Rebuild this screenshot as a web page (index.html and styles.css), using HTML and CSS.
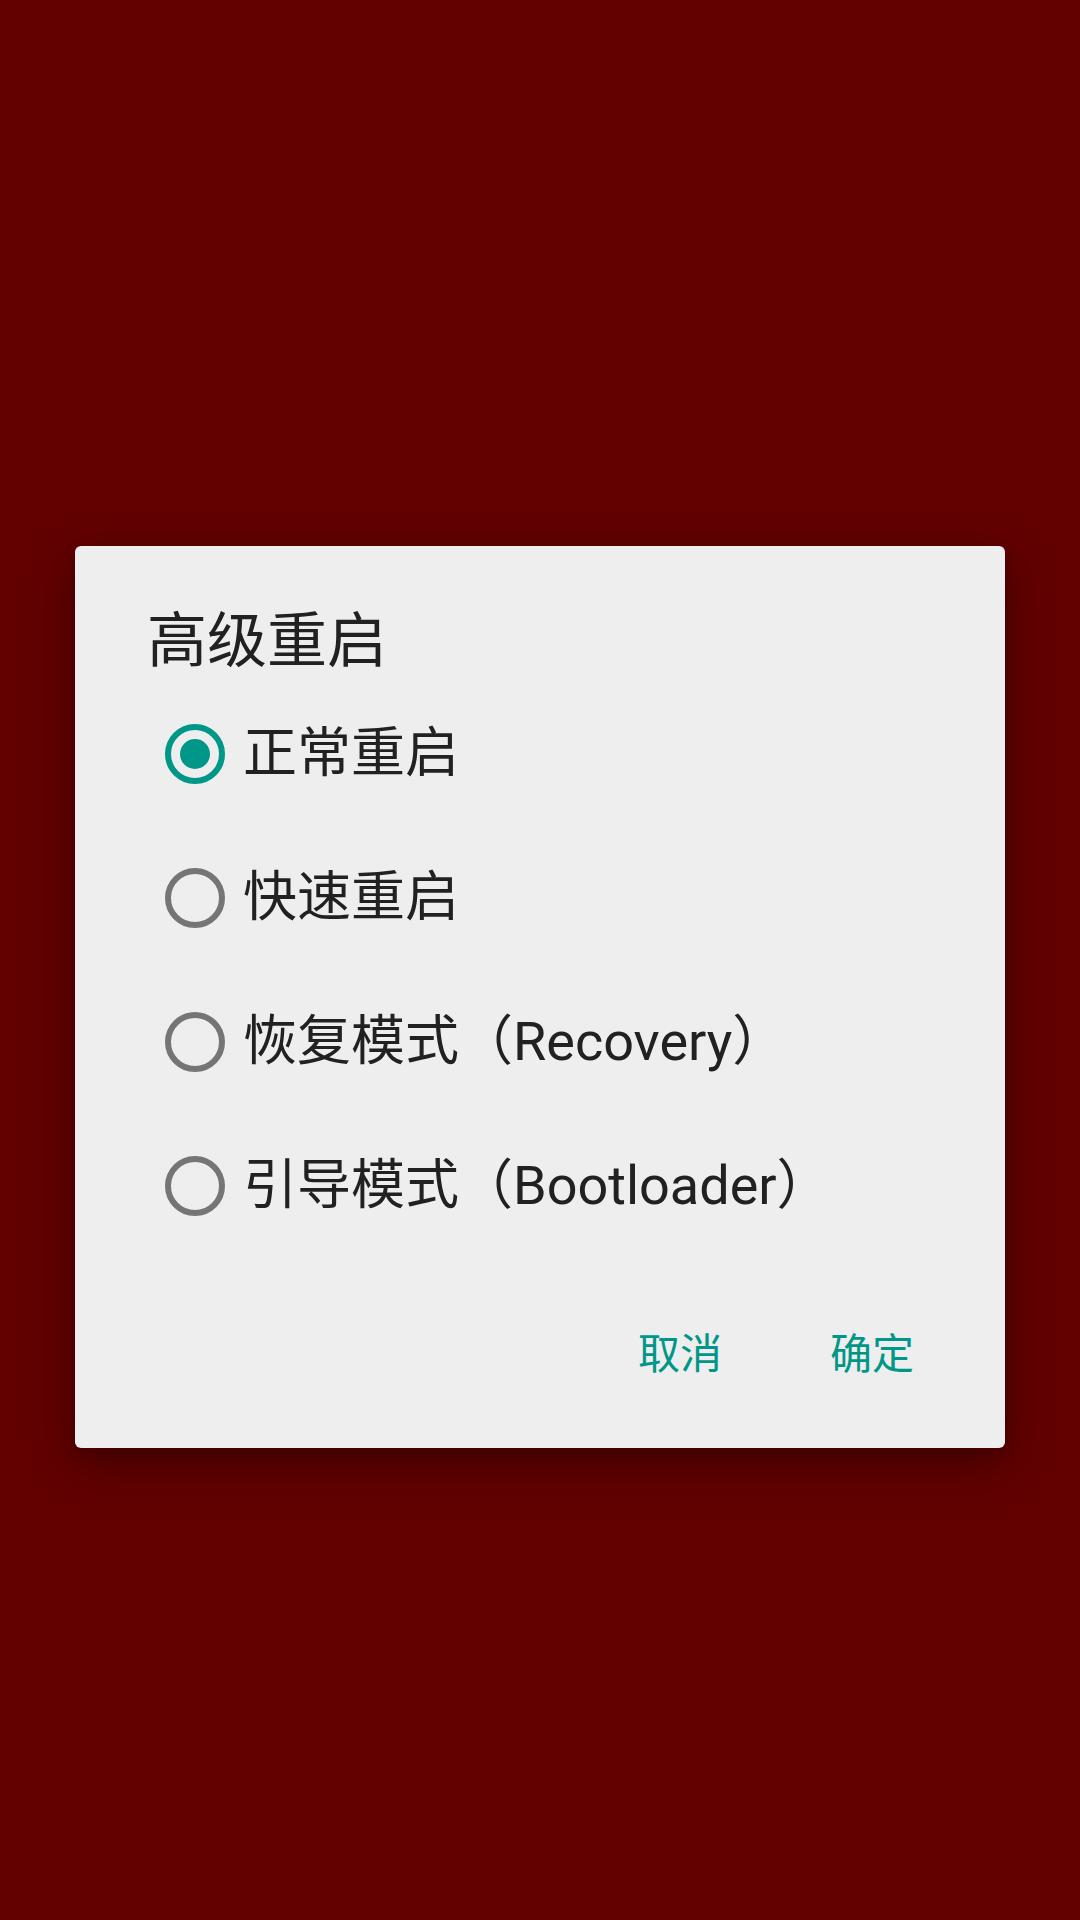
FILE: index.html
```html
<!DOCTYPE html>
<html lang="zh-CN">
<head>
<meta charset="utf-8">
<title>高级重启</title>
<link rel="stylesheet" href="styles.css">
</head>
<body>
<div class="screen">
  <div class="dialog">
    <div class="title">高级重启</div>
    <div class="options">
      <div class="option">
        <span class="radio checked"><span class="dot"></span></span>
        <span class="label">正常重启</span>
      </div>
      <div class="option">
        <span class="radio"></span>
        <span class="label">快速重启</span>
      </div>
      <div class="option">
        <span class="radio"></span>
        <span class="label">恢复模式（Recovery）</span>
      </div>
      <div class="option">
        <span class="radio"></span>
        <span class="label">引导模式（Bootloader）</span>
      </div>
    </div>
    <div class="buttons">
      <div class="btn">取消</div>
      <div class="btn">确定</div>
    </div>
  </div>
</div>
</body>
</html>
```
FILE: styles.css
```css
html, body {
  margin: 0;
  padding: 0;
}
body {
  width: 1080px;
  height: 1920px;
  background: #620000;
  font-family: Roboto, "Noto Sans CJK SC", sans-serif;
  overflow: hidden;
}
.screen {
  width: 1080px;
  height: 1920px;
  display: flex;
  flex-direction: column;
  align-items: flex-start;
}
.dialog {
  margin-top: 546px;
  margin-left: 75px;
  width: 930px;
  height: 902px;
  box-sizing: border-box;
  background: #eeeeee;
  border-radius: 6px;
  box-shadow: 0 16px 44px rgba(0, 0, 0, 0.32), 0 4px 14px rgba(0, 0, 0, 0.16);
  display: flex;
  flex-direction: column;
  padding-top: 56px;
}
.title {
  font-size: 60px;
  line-height: 80px;
  height: 80px;
  color: #212121;
  padding-left: 72px;
  white-space: nowrap;
}
.options {
  display: flex;
  flex-direction: column;
  padding-left: 90px;
}
.option {
  height: 144px;
  display: flex;
  align-items: center;
}
.radio {
  width: 60px;
  height: 60px;
  box-sizing: border-box;
  border: 6px solid #757575;
  border-radius: 50%;
  display: flex;
  align-items: center;
  justify-content: center;
  flex: none;
}
.radio.checked {
  border-color: #009688;
}
.dot {
  width: 30px;
  height: 30px;
  border-radius: 50%;
  background: #009688;
}
.label {
  margin-left: 18px;
  font-size: 54px;
  line-height: 72px;
  color: #212121;
  white-space: nowrap;
}
.buttons {
  display: flex;
  justify-content: flex-end;
  padding-top: 38px;
  padding-right: 37px;
}
.btn {
  min-width: 192px;
  height: 108px;
  display: flex;
  align-items: center;
  justify-content: center;
  font-size: 42px;
  color: #009688;
}
```
